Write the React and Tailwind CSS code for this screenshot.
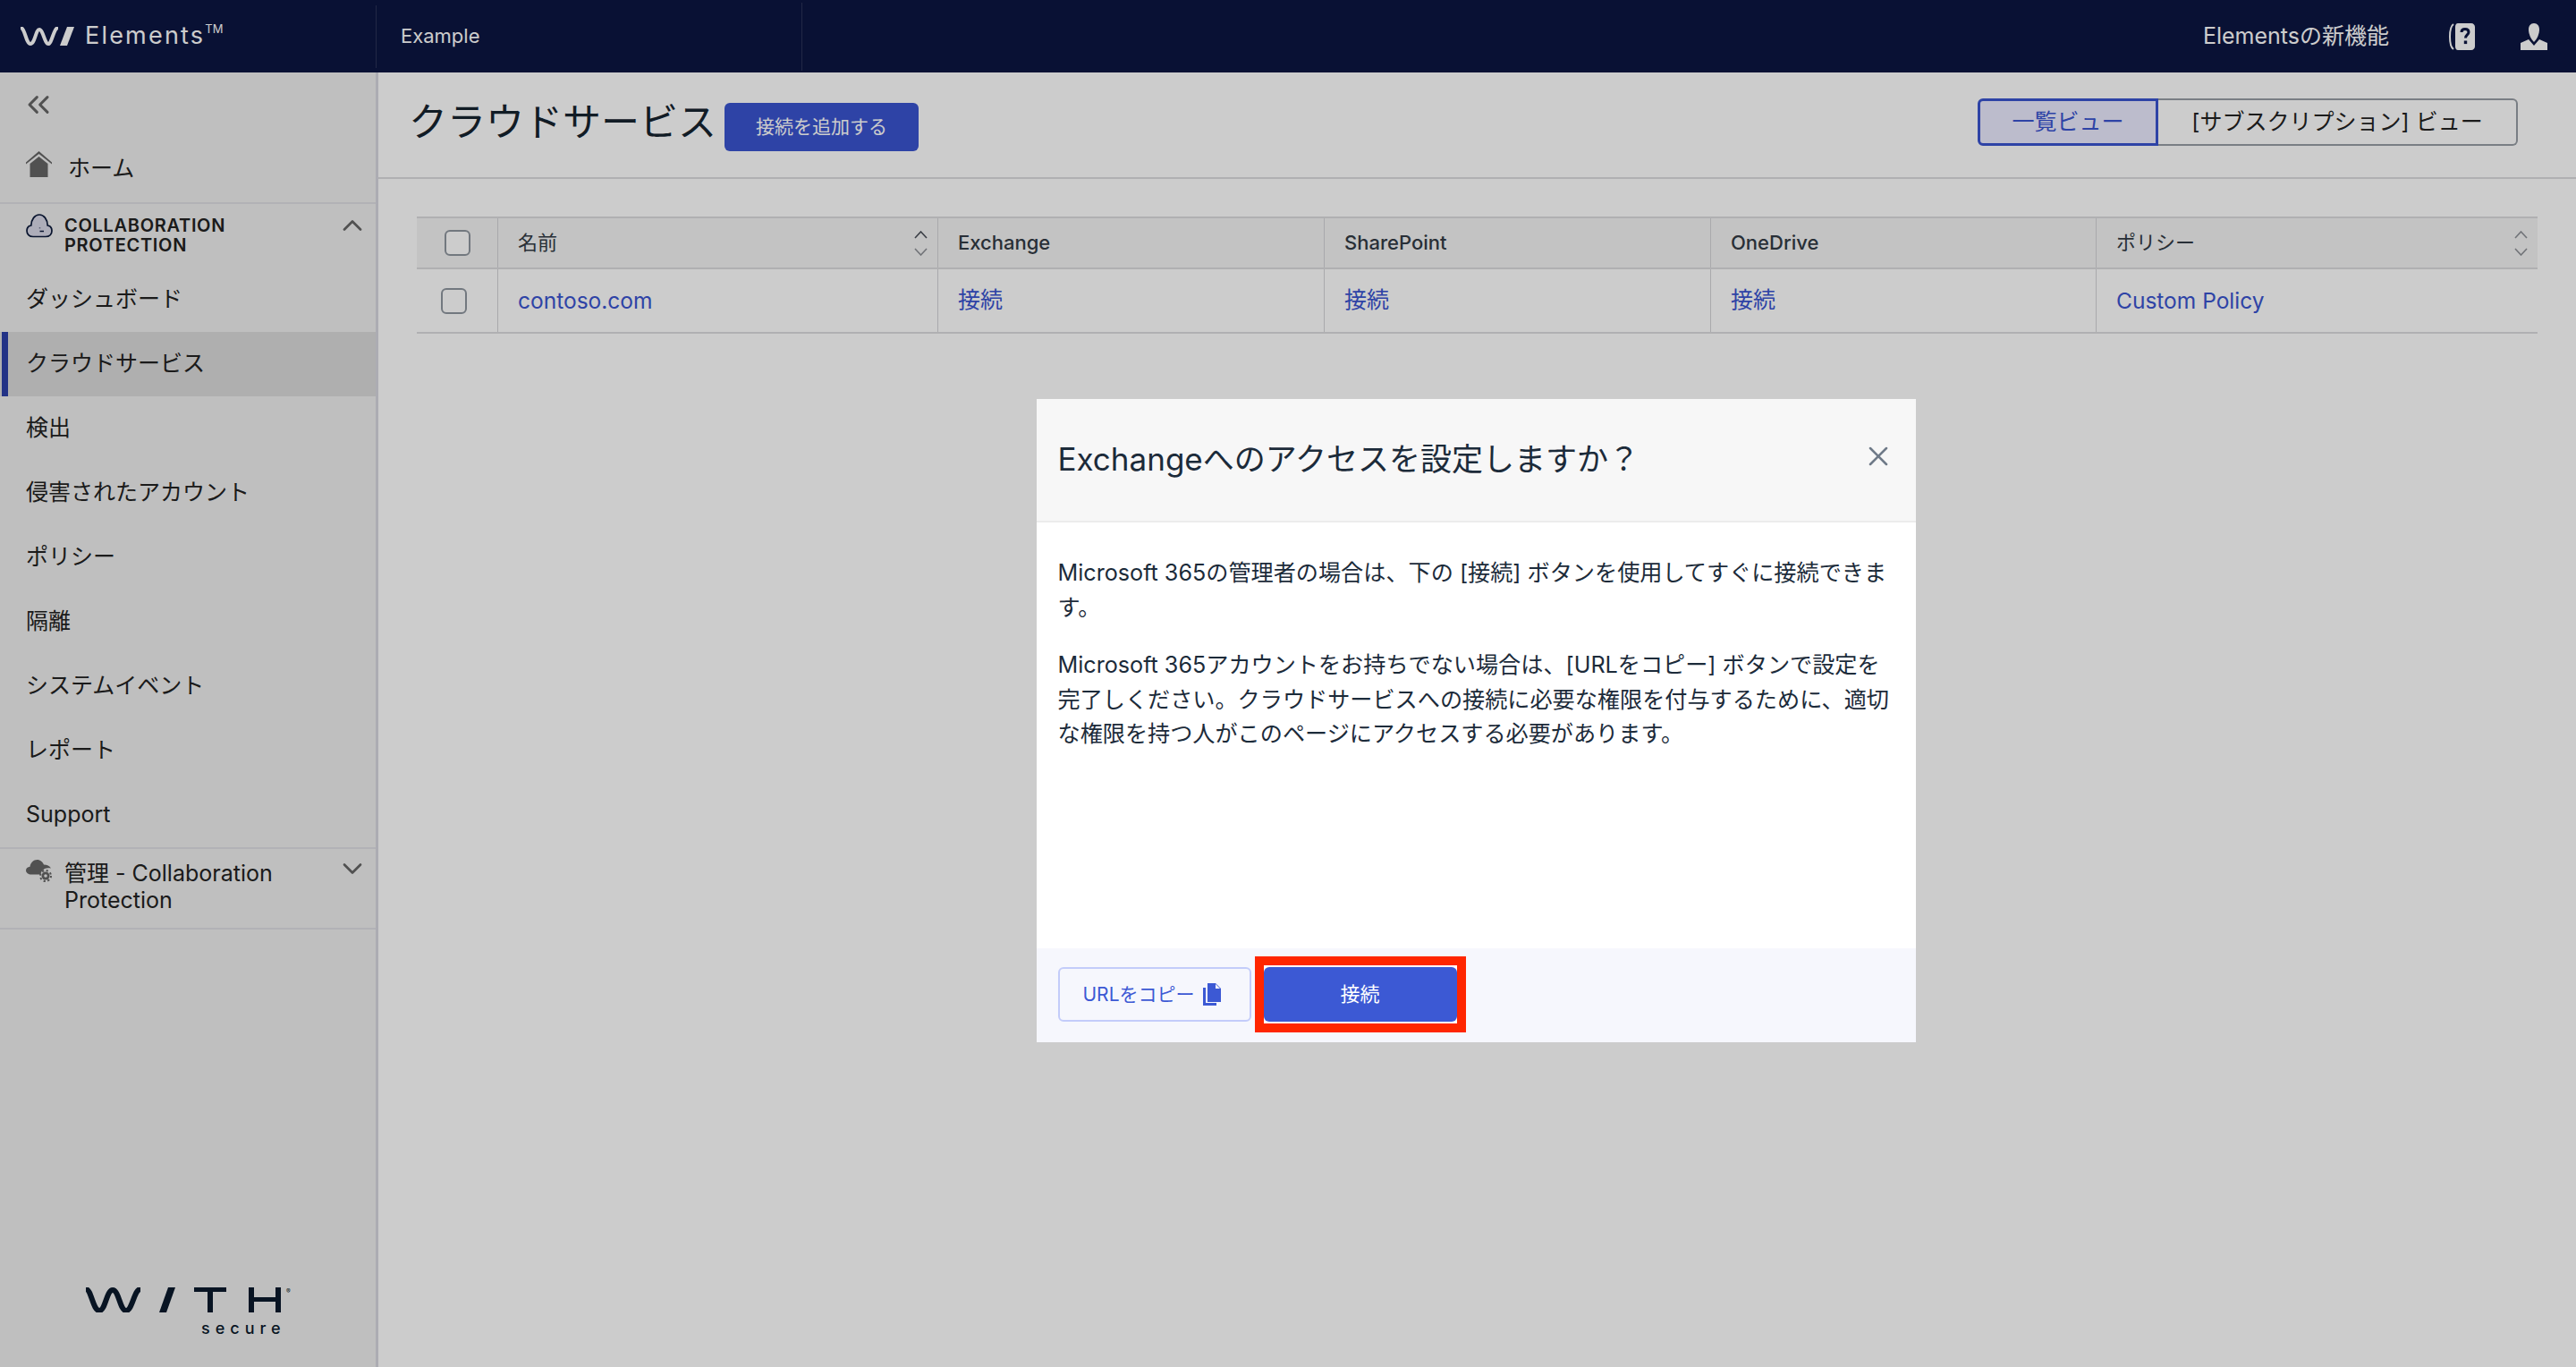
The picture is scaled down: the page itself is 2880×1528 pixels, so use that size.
import React from "react";
import { X, ChevronUp, ChevronDown, ChevronsLeft } from "lucide-react";

const navItems = ["ダッシュボード", "クラウドサービス", "検出", "侵害されたアカウント", "ポリシー", "隔離", "システムイベント", "レポート", "Support"];

const WaveMark = ({ className }) => (
  <svg className={className} viewBox="0 0 62 21" fill="none">
    <path d="M1 1c5 0 6 18 11 18s6-16 10-16 6 16 10 16 6-18 11-18" stroke="currentColor" strokeWidth="4" />
    <path d="M45 21 53 0h8l-8 21z" fill="currentColor" />
  </svg>
);

const HomeIcon = () => (
  <svg className="w-[29px] h-[29px] text-[#666]" viewBox="0 0 29 29" fill="currentColor">
    <path d="M14.5 0 29 12.500 29 14.500 14.500 3 0 14.500 0 12.500z" />
    <path d="M14.500 6 24.500 14V29h-20V14z" />
  </svg>
);

const CloudIcon = () => (
  <svg className="w-[30px] h-[27px]" viewBox="0 0 30 27" fill="#d9d9e8" stroke="#0c1a3a" strokeWidth="1.700">
    <path d="M8 25.500C3.500 25.500 1 22.500 1 19c0-3 2-5.500 4.800-6C6 6 10 1 15 1c5 0 9 5 9.200 12 2.800.5 4.800 3 4.800 6 0 3.500-2.500 6.500-7 6.500z" />
    <path d="M15.500 15.500v.8M15.500 19.500H20" strokeWidth="1.500" />
  </svg>
);

const CloudGearIcon = () => (
  <svg className="w-[29px] h-[25px] text-[#666]" viewBox="0 0 29 25" fill="currentColor">
    <path d="M6 16.500c-3.200 0-6-1.800-6-4.500 0-2.500 2-4 4.500-4.300C5 3.500 8.500 0 12.500 0c3.500 0 6.500 2.500 7.500 5.500 3.500 0 6.500 1.500 8 4-4-1-8 0-10 3-1 1.500-1.500 2.800-1.500 4z" />
    <circle cx="22" cy="18" r="4.500" />
    <circle cx="22" cy="18" r="6" fill="none" stroke="currentColor" strokeWidth="2" strokeDasharray="2.200 2.500" />
    <circle cx="22" cy="18" r="1.800" fill="#efefef" />
  </svg>
);

const HelpIcon = () => (
  <svg className="w-[29px] h-[30px] text-white" viewBox="0 0 29 30" fill="currentColor">
    <path d="M5 1C2 3 1 8 1 15s1 12 4 14" fill="none" stroke="currentColor" strokeWidth="2" />
    <path d="M10 0h15c2 0 4 2 4 4v22c0 2-2 4-4 4H10c-2 0-3-2-3-4V4c0-2 1-4 3-4z" />
    <path d="M14 10c0-2.500 1.500-3.500 4-3.500s4 1.300 4 3.500c0 3-3.500 3-3.500 6.500" fill="none" stroke="#0c1642" strokeWidth="3" />
    <rect x="16.800" y="19.500" width="3.400" height="3.600" fill="#0c1642" />
  </svg>
);

const UserIcon = () => (
  <svg className="w-[30px] h-[30px] text-white" viewBox="0 0 30 30" fill="currentColor">
    <path d="M15 0c3.800 0 6 3 6 7 0 4-2 9-3.500 11L15 21l-2.500-3C11 16 9 11 9 7c0-4 2.200-7 6-7z" />
    <path d="M0 22l9-4 6 7 6-7 9 4v8H0z" />
  </svg>
);

const CopyIcon = () => (
  <svg className="w-[20px] h-[25px] text-[#3c59d4]" viewBox="0 0 20 25" fill="currentColor">
    <path d="M5 0h9l6 6v15H5z" />
    <path d="M0 5h3v17h12v3H0z" />
    <path d="M14 1l5 5h-5z" fill="#f6f7fd" />
  </svg>
);

// two stacked carets, the lower one is lighter
const SortIcon = ({ muted }) => (
  <svg className="w-[15px] h-[28px] text-[#4a4f58]" viewBox="0 0 15 28" fill="none" stroke="currentColor" strokeWidth="1.600">
    <path d="M1 8 7.500 1 14 8" opacity={muted ? 0.6 : 1} />
    <path d="M1 20 7.500 27 14 20" opacity="0.6" />
  </svg>
);

const Checkbox = () => <div className="w-[29px] h-[29px] rounded-[6px] border-2 border-[#8f969f] bg-white" />;

function Sidebar() {
  return (
    <aside className="w-[423px] shrink-0 flex flex-col bg-[#efefef] border-r-[3px] border-[#d8d8e0]">
      <div className="h-[65px] pl-[23px] pt-[16px] text-[#666]">
        <ChevronsLeft size={40} strokeWidth={1.800} />
      </div>
      <div className="h-[80px] pl-[29px] pt-[23px] flex items-start gap-[18px] text-[25px] text-[#222]">
        <HomeIcon />
        <span className="leading-[36px] pt-[1px]">ホーム</span>
      </div>
      <div className="h-[73px] border-t-2 border-[#dfdfe4] pl-[29px] pr-[8px] pt-[11px] flex items-start text-[#222]">
        <CloudIcon />
        <div className="ml-[13px] flex-1 text-[20px] font-semibold tracking-[0.700px] leading-[22px] pt-[2px]">
          COLLABORATION<br />PROTECTION
        </div>
        <ChevronUp size={36} strokeWidth={1.800} className="text-[#666] -mt-[5px]" />
      </div>
      {navItems.map((item) => {
        const active = item === "クラウドサービス";
        return (
          <div
            key={item}
            className={`h-[72px] pl-[29px] flex items-center text-[25px] text-[#222] relative ${active ? "bg-[#dbdbdb]" : ""}`}
          >
            {active && <div className="absolute left-[2px] top-0 bottom-0 w-[7px] bg-[#2b3fa8]" />}
            {item}
          </div>
        );
      })}
      <div className="h-[92px] border-y-2 border-[#dfdfe4] pl-[29px] pr-[8px] pt-[12px] flex items-start text-[#222]">
        <CloudGearIcon />
        <div className="ml-[14px] flex-1 text-[25px] leading-[30px]">管理 - Collaboration<br />Protection</div>
        <ChevronDown size={36} strokeWidth={1.800} className="text-[#666] -mt-[8px]" />
      </div>
      <div className="mt-auto pb-[36px] pl-[95px] text-[#0b1a2c]">
        <div className="flex items-start h-[30px]">
          <svg className="w-[63px] h-[28px]" viewBox="0 0 63 28" fill="none">
            <path d="M1 2c6 0 8 24 15 24S24 3 31 3s8 23 15 23 9-24 16-24" stroke="currentColor" strokeWidth="6" />
          </svg>
          <svg className="w-[18px] h-[28px] ml-[20px]" viewBox="0 0 18 28" fill="currentColor">
            <path d="M10 0h8L8 28H0z" />
          </svg>
          <svg className="w-[36px] h-[28px] ml-[21px]" viewBox="0 0 36 28" fill="currentColor">
            <path d="M0 0h36v5H21v23h-6V5H0z" />
          </svg>
          <svg className="w-[36px] h-[28px] ml-[25px]" viewBox="0 0 36 28" fill="currentColor">
            <path d="M0 0h6v11h24V0h6v28h-6V16H6v12H0z" />
          </svg>
          <span className="text-[7px] leading-[10px] ml-[6px]">®</span>
        </div>
        <div className="ml-[130px] mt-[9px] text-[18px] leading-[14px] font-medium tracking-[6px]">secure</div>
      </div>
    </aside>
  );
}

function CloudTable() {
  const cols = "grid grid-cols-[91px_492px_432px_432px_431px_493px]";
  const cell = "border-r border-[#d4d4d8] flex items-center pl-[22px]";
  return (
    <div className="mx-[43px] mt-[42px] w-[2371px]">
      <div className={`${cols} h-[59px] bg-[#f4f4f4] border-y-2 border-[#dcdcdf] text-[22px] text-[#333b45]`}>
        <div className={`${cell} !pl-[31px]`}><Checkbox /></div>
        <div className={`${cell} justify-between pr-[11px]`}>名前<SortIcon /></div>
        <div className={`${cell} font-medium`}>Exchange</div>
        <div className={`${cell} font-medium`}>SharePoint</div>
        <div className={`${cell} font-medium`}>OneDrive</div>
        <div className="flex items-center justify-between pl-[22px] pr-[11px]">ポリシー<SortIcon muted /></div>
      </div>
      <div className={`${cols} h-[72px] border-b-2 border-[#dcdcdf] text-[25px] text-[#3a54d0]`}>
        <div className={`${cell} !pl-[27px]`}><Checkbox /></div>
        <div className={`${cell} text-[24.500px]`}>contoso.com</div>
        <div className={cell}>接続</div>
        <div className={cell}>接続</div>
        <div className={cell}>接続</div>
        <div className="flex items-center pl-[22px] text-[24.500px]">Custom Policy</div>
      </div>
    </div>
  );
}

function Dialog() {
  return (
    <div className="absolute inset-0 bg-black/20 pl-[420px] pt-[83px] flex items-center justify-center">
      <div className="w-[983px] h-[719px] bg-white flex flex-col text-[#1c2b3a]">
        <div className="h-[138px] shrink-0 bg-[#f7f7f7] border-b-2 border-[#ececec] pl-[24px] pr-[24px] flex items-center justify-between">
          <h2 className="text-[35px] leading-none pb-[2px]">Exchangeへのアクセスを設定しますか？</h2>
          <X size={36} strokeWidth={1.700} className="text-[#6f7a88] mb-[8px]" />
        </div>
        <div className="flex-1 px-[24px] pt-[37px] text-[25.150px] leading-[38.500px]">
          <p>Microsoft 365の管理者の場合は、下の [接続] ボタンを使用してすぐに接続できます。</p>
          <p className="mt-[26px]">Microsoft 365アカウントをお持ちでない場合は、[URLをコピー] ボタンで設定を完了しください。クラウドサービスへの接続に必要な権限を付与するために、適切な権限を持つ人がこのページにアクセスする必要があります。</p>
        </div>
        <div className="h-[105px] shrink-0 bg-[#f6f7fd] pl-[24px] flex items-start pt-[9px]">
          <button className="mt-[12px] w-[216px] h-[61px] pr-[6px] rounded-[6px] border-2 border-[#c3ccfa] flex items-center justify-center gap-[9px] text-[21px] text-[#3c59d4]">
            URLをコピー <CopyIcon />
          </button>
          {/* red highlight box from the docs screenshot */}
          <div className="ml-[4px] w-[236px] h-[85px] border-[10px] border-[#ff2600] bg-white flex items-center justify-center">
            <button className="w-[216px] h-[61px] rounded-[6px] bg-[#3c59d4] text-white text-[22px]">接続</button>
          </div>
        </div>
      </div>
    </div>
  );
}

export default function App() {
  return (
    <div
      className="relative w-[2880px] h-[1528px] bg-white overflow-hidden flex flex-col"
      style={{ fontFamily: 'Inter, "Noto Sans CJK JP", sans-serif' }}
    >
      <header className="h-[81px] shrink-0 bg-[#0c1642] flex items-center text-white">
        <div className="w-[421px] h-[70px] border-r border-[#2b3358] flex items-center pl-[22px]">
          <WaveMark className="w-[62px] h-[21px]" />
          <span className="ml-[11px] text-[27px] tracking-[2.200px]">Elements</span>
          <span className="text-[13px] self-start mt-[17px]">TM</span>
        </div>
        <div className="w-[476px] h-[76px] border-r border-[#2b3358] flex items-center pl-[27px] text-[22px]">Example</div>
        <div className="flex-1 flex items-center justify-end pr-[32px]">
          <span className="text-[25px]">Elementsの新機能</span>
          <span className="ml-[67px]"><HelpIcon /></span>
          <span className="ml-[51px]"><UserIcon /></span>
        </div>
      </header>
      <div className="flex-1 flex min-h-0">
        <Sidebar />
        <main className="flex-1">
          <div className="h-[119px] border-b-2 border-[#dcdcdf] pl-[34px] pr-[65px] flex items-start justify-between">
            <div className="flex items-start">
              <h1 className="text-[43px] leading-[60px] pt-[25px] text-[#16242f]">クラウドサービス</h1>
              <button className="ml-[9px] mt-[34px] w-[217px] h-[54px] rounded-[6px] bg-[#3a54d0] text-white text-[21px]">接続を追加する</button>
            </div>
            <div className="flex mt-[29px] text-[25px]">
              <button className="w-[202px] h-[53px] rounded-l-[6px] border-[3px] border-[#3a54d0] bg-[#ebebff] text-[#3a54d0]">一覧ビュー</button>
              <button className="w-[402px] h-[53px] rounded-r-[6px] border-2 border-l-0 border-[#989ea5] text-[#222]">[サブスクリプション] ビュー</button>
            </div>
          </div>
          <CloudTable />
        </main>
      </div>
      <Dialog />
    </div>
  );
}
